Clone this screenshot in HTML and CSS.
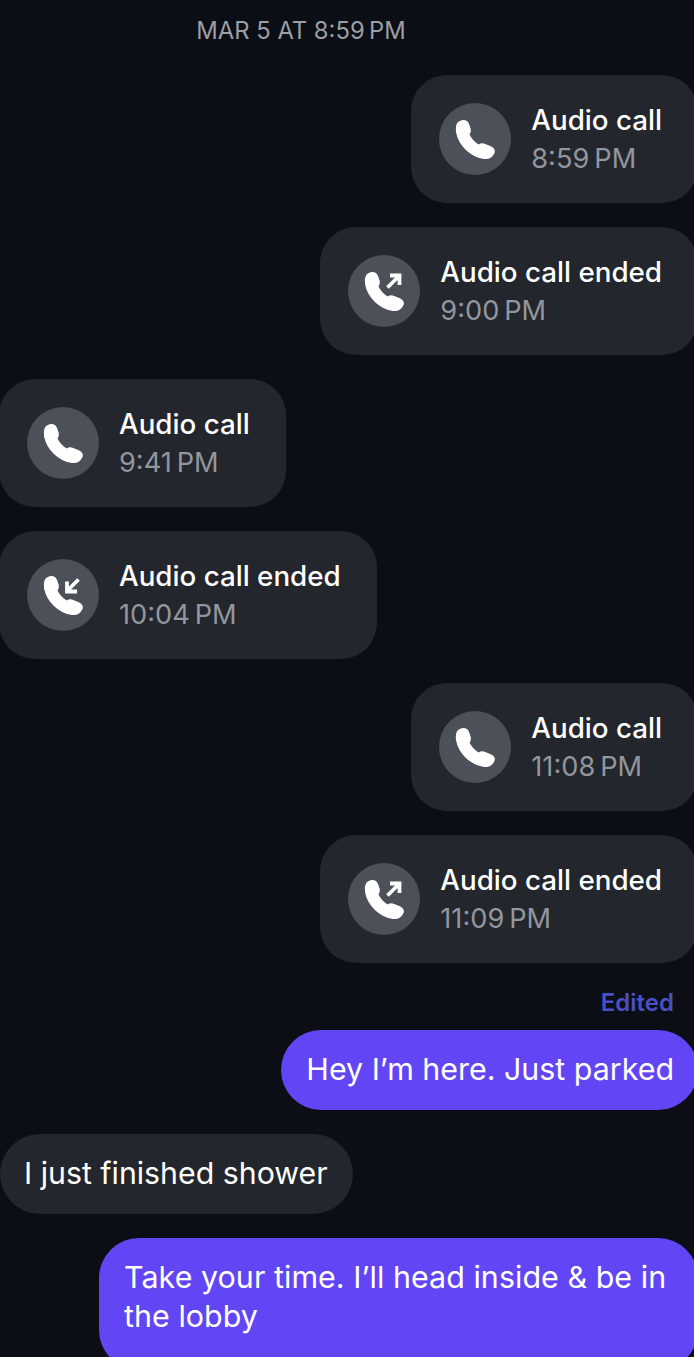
FILE: index.html
```html
<!DOCTYPE html>
<html lang="en">
  <head>
    <meta charset="utf-8" />
    <title>Messages</title>
    <link rel="stylesheet" href="styles.css">
  </head>
  <body>
    <svg class="defs" width="0" height="0">
      <symbol id="phone" viewBox="0 0 72 72">
        <path d="M21 18.6C25 17 28 18 29.5 21.5L31 26C31.6 28.5 31 30 29.8 31.5C31.5 35.5 35.5 40 40 42.3C41.5 41 43.5 40.6 46 41.6L51.5 44C55 45.5 56 47.5 54.5 50.5C52.5 54.5 49 55.8 45 55.3C32 53.5 20 42 17.8 29.5C17 24.5 18 20 21 18.6Z" fill="#fff" stroke="#fff" stroke-width="1.4" stroke-linejoin="round" />
      </symbol>
    </svg>

    <div class="chat">
      <div class="date">MAR 5 AT 8:59&#8201;PM</div>

      <div class="call mine">
        <div class="call-icon">
          <svg width="72" height="72"><use href="#phone" /></svg>
        </div>
        <div>
          <div class="call-title">Audio call</div>
          <div class="call-time">8:59&#8201;PM</div>
        </div>
      </div>

      <div class="call mine">
        <div class="call-icon">
          <svg width="72" height="72">
            <use href="#phone" />
            <path d="M39.5 32.5L50 22M42 20.5H51.5V30" fill="none" stroke="#fff" stroke-width="3.8" />
          </svg>
        </div>
        <div>
          <div class="call-title">Audio call ended</div>
          <div class="call-time">9:00&#8201;PM</div>
        </div>
      </div>

      <div class="call theirs">
        <div class="call-icon">
          <svg width="72" height="72"><use href="#phone" /></svg>
        </div>
        <div>
          <div class="call-title">Audio call</div>
          <div class="call-time">9:41&#8201;PM</div>
        </div>
      </div>

      <div class="call theirs">
        <div class="call-icon">
          <svg width="72" height="72">
            <use href="#phone" />
            <path d="M51.5 20.5L41 31M40 22.5V32.5H50" fill="none" stroke="#fff" stroke-width="3.8" />
          </svg>
        </div>
        <div>
          <div class="call-title">Audio call ended</div>
          <div class="call-time">10:04&#8201;PM</div>
        </div>
      </div>

      <div class="call mine">
        <div class="call-icon">
          <svg width="72" height="72"><use href="#phone" /></svg>
        </div>
        <div>
          <div class="call-title">Audio call</div>
          <div class="call-time">11:08&#8201;PM</div>
        </div>
      </div>

      <div class="call mine">
        <div class="call-icon">
          <svg width="72" height="72">
            <use href="#phone" />
            <path d="M39.5 32.5L50 22M42 20.5H51.5V30" fill="none" stroke="#fff" stroke-width="3.8" />
          </svg>
        </div>
        <div>
          <div class="call-title">Audio call ended</div>
          <div class="call-time">11:09&#8201;PM</div>
        </div>
      </div>

      <div class="edited">Edited</div>
      <div class="bubble sent">Hey I’m here. Just parked</div>
      <div class="bubble received">I just finished shower</div>
      <div class="bubble sent wide">Take your time. I’ll head inside &amp; be in the lobby</div>
    </div>
  </body>
</html>
```

FILE: styles.css
```css
html,
body {
  margin: 0;
  height: 100%;
  overflow: hidden;
  background-color: #0b0e14;
}
body {
  font-family: Inter, "Liberation Sans", sans-serif;
  color: #fff;
}
.defs {
  display: block;
  height: 0;
}
.chat {
  display: flex;
  flex-direction: column;
  gap: 24px;
  padding-top: 16px;
}
.date {
  width: 602px;
  text-align: center;
  font-size: 23.8px;
  line-height: 29px;
  color: #9a9ea6;
  margin-bottom: 6px;
}
.call {
  display: flex;
  align-items: center;
  gap: 20px;
  height: 128px;
  box-sizing: border-box;
  padding: 0 36px 0 28px;
  background-color: #23262c;
  border-radius: 36px;
}
.mine {
  align-self: flex-end;
  margin-right: -4px;
}
.theirs {
  align-self: flex-start;
  margin-left: -1px;
}
.call-icon {
  width: 72px;
  height: 72px;
  flex: none;
  border-radius: 50%;
  background-color: #4c5059;
}
.call-icon svg {
  display: block;
}
.call-title {
  padding-top: 1px;
  font-size: 27.75px;
  line-height: 36px;
  font-weight: 500;
}
.call-time {
  font-size: 27.2px;
  line-height: 36px;
  margin-top: 3px;
  color: #92969f;
}
.edited {
  align-self: flex-end;
  margin: 2px 20px -11px 0;
  font-size: 24px;
  line-height: 28px;
  font-weight: 600;
  color: #4a4fc4;
}
.bubble {
  padding: 20px 24px 21px 25px;
  font-size: 30.4px;
  line-height: 39px;
  border-radius: 40px;
}
.sent {
  align-self: flex-end;
  margin-right: -4px;
  background-color: #6246f5;
}
.received {
  align-self: flex-start;
  background-color: #23262c;
  padding-left: 24px;
  padding-right: 25px;
  font-size: 30.3px;
}
.wide {
  width: 550px;
  padding-bottom: 34px;
  letter-spacing: 0.06px;
}
```
